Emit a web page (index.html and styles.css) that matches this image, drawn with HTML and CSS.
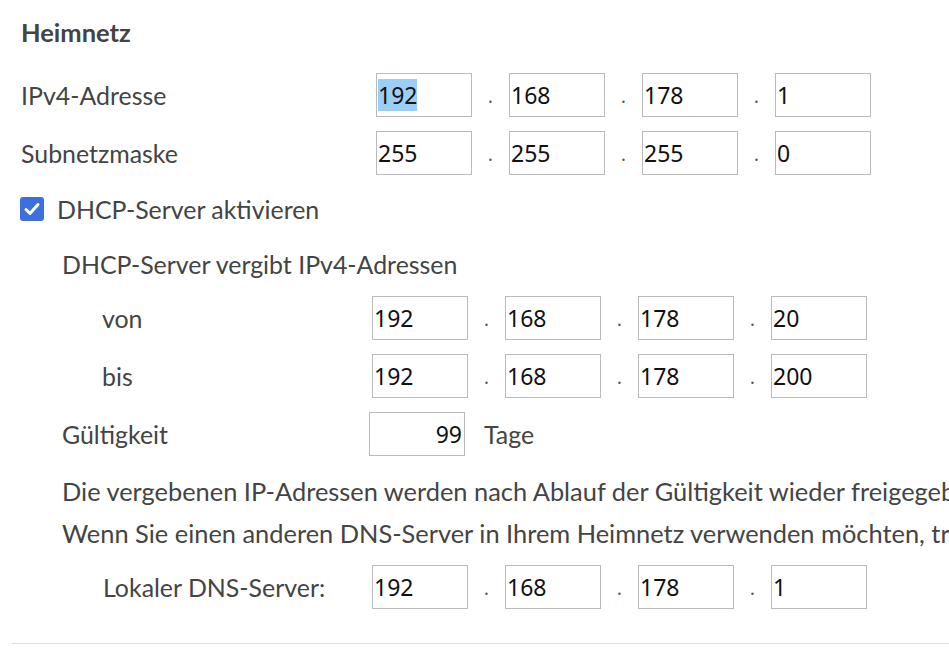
FILE: index.html
```html
<!DOCTYPE html>
<html lang="de">
<head>
<meta charset="utf-8">
<title>Heimnetz</title>
<link rel="stylesheet" href="styles.css">
</head>
<body>
<div class="page">
  <h2 class="title">Heimnetz</h2>

  <div class="row row-top">
    <span class="label w-top">IPv4-Adresse</span>
    <div class="ip">
      <span class="field"><span class="sel">192</span></span><span class="dot">.</span>
      <span class="field">168</span><span class="dot">.</span>
      <span class="field">178</span><span class="dot">.</span>
      <span class="field">1</span>
    </div>
  </div>
  <div class="row row-top">
    <span class="label w-top">Subnetzmaske</span>
    <div class="ip">
      <span class="field">255</span><span class="dot">.</span>
      <span class="field">255</span><span class="dot">.</span>
      <span class="field">255</span><span class="dot">.</span>
      <span class="field">0</span>
    </div>
  </div>

  <label class="check-row">
    <span class="checkbox"><svg viewBox="0 0 24 24" width="24" height="24"><rect x="0" y="0" width="24" height="24" rx="3" fill="#3d6fe0"/><path d="M6 12.5l4 4 8-9" fill="none" stroke="#fff" stroke-width="3" stroke-linecap="round" stroke-linejoin="round"/></svg></span>
    <span class="label">DHCP-Server aktivieren</span>
  </label>

  <div class="sub">
    <div class="sub-title">DHCP-Server vergibt IPv4-Adressen</div>

    <div class="row row-range">
      <span class="label w-range">von</span>
      <div class="ip">
        <span class="field">192</span><span class="dot">.</span>
        <span class="field">168</span><span class="dot">.</span>
        <span class="field">178</span><span class="dot">.</span>
        <span class="field">20</span>
      </div>
    </div>
    <div class="row row-range">
      <span class="label w-range">bis</span>
      <div class="ip">
        <span class="field">192</span><span class="dot">.</span>
        <span class="field">168</span><span class="dot">.</span>
        <span class="field">178</span><span class="dot">.</span>
        <span class="field">200</span>
      </div>
    </div>
    <div class="row row-valid">
      <span class="label w-valid">Gültigkeit</span>
      <span class="field right">99</span>
      <span class="label unit">Tage</span>
    </div>

    <div class="texts">
      <p class="text">Die vergebenen IP-Adressen werden nach Ablauf der Gültigkeit wieder freigegeben.</p>
      <p class="text">Wenn Sie einen anderen DNS-Server in Ihrem Heimnetz verwenden möchten, tragen Sie ihn hier ein.</p>
    </div>

    <div class="row row-dns">
      <span class="label w-dns">Lokaler DNS-Server:</span>
      <div class="ip">
        <span class="field">192</span><span class="dot">.</span>
        <span class="field">168</span><span class="dot">.</span>
        <span class="field">178</span><span class="dot">.</span>
        <span class="field">1</span>
      </div>
    </div>
  </div>
  <div class="rule"></div>
</div>
</body>
</html>
```

FILE: styles.css
```css
html, body {
  margin: 0;
  padding: 0;
  background: #fff;
  overflow: hidden;
}
.page {
  width: 949px;
  height: 648px;
  overflow: hidden;
  font-family: "Source Sans Pro", "Lato", "Noto Sans", sans-serif;
  font-size: 24.9px;
  color: #444;
  white-space: nowrap;
}
.title {
  margin: 0;
  padding: 17px 0 0 21px;
  height: 38px;
  font-size: 25.5px;
  font-weight: 700;
  line-height: 30px;
  color: #444;
}
.row {
  display: flex;
  align-items: center;
  height: 44px;
  margin-left: 21px;
}
.row-top { margin-top: 18px; }
.row-top + .row-top { margin-top: 14px; }
.label {
  display: inline-block;
  line-height: 30px;
}
.w-top { width: 355px; }
.ip {
  display: flex;
  align-items: center;
}
.field {
  box-sizing: border-box;
  display: inline-block;
  width: 96px;
  height: 44px;
  border: 1px solid #bbb;
  background: #fff;
  font-family: "Noto Sans", "DejaVu Sans", sans-serif;
  font-size: 23px;
  line-height: 42px;
  color: #111;
  padding: 0 0 0 1px;
}
.field.right { text-align: right; padding: 0 2px 0 0; }
.sel { background: #9ccff8; }
.dot {
  display: inline-block;
  width: 37px;
  text-align: center;
  font-family: "Noto Sans", sans-serif;
  font-size: 18px;
  color: #555;
  padding-top: 2px;
}
.check-row {
  display: flex;
  align-items: center;
  margin: 22px 0 0 20px;
  height: 24px;
}
.checkbox {
  display: inline-flex;
  width: 24px;
  height: 24px;
  margin-right: 13px;
}
.sub { margin-left: 41px; }
.sub-title {
  margin-top: 28px;
  line-height: 30px;
  margin-left: 21px;
}
.sub .row { margin-left: 0; }
.row-range { margin-top: 17px; padding-left: 61px; }
.row-range + .row-range { margin-top: 14px; }
.w-range { width: 270px; }
.row-valid { margin-top: 14px; padding-left: 21px; }
.w-valid { width: 307px; }
.unit { margin-left: 19px; }
.texts {
  margin: 14px 0 0 21px;
  font-size: 25.4px;
}
.text {
  margin: 0;
  line-height: 42px;
}
.row-dns { margin-top: 11px; padding-left: 62px; }
.w-dns { width: 269px; }
.rule {
  margin: 34px 0 0 12px;
  border-top: 1px solid #ddd;
}
```
